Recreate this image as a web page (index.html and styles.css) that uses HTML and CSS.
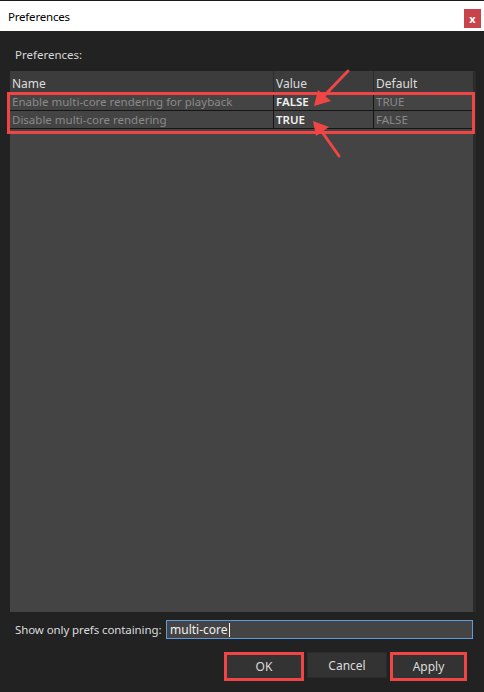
FILE: index.html
```html
<!DOCTYPE html>
<html>
<head>
<meta charset="utf-8">
<link rel="stylesheet" href="styles.css">
</head>
<body>
<div class="window">
  <div class="titlebar">
    <span class="title">Preferences</span>
    <span class="close">x</span>
  </div>
  <div class="content">
    <div class="label">Preferences:</div>
    <div class="tablewrap">
      <div class="table">
        <div class="row head">
          <div class="cell c1">Name</div>
          <div class="cell c2">Value</div>
          <div class="cell c3">Default</div>
        </div>
        <div class="row">
          <div class="cell c1">Enable multi-core rendering for playback</div>
          <div class="cell c2 val">FALSE</div>
          <div class="cell c3">TRUE</div>
        </div>
        <div class="row">
          <div class="cell c1">Disable multi-core rendering</div>
          <div class="cell c2 val">TRUE</div>
          <div class="cell c3">FALSE</div>
        </div>
        <div class="body-fill"></div>
      </div>
      <div class="strip"></div>
    </div>
    <div class="filter">
      <span class="flabel">Show only prefs containing:</span>
      <div class="input">multi-core<span class="caret"></span></div>
    </div>
    <div class="buttons">
      <div class="btn hl">OK</div>
      <div class="btn">Cancel</div>
      <div class="btn hl">Apply</div>
    </div>
  </div>
  <div class="hlbox"></div>
  <svg class="arrows" width="484" height="692" viewBox="0 0 484 692">
    <line x1="348" y1="71" x2="322" y2="98" stroke="#f04545" stroke-width="3" stroke-linecap="round"/>
    <polygon points="314,106 318,90 331,101" fill="#f04545"/>
    <line x1="339" y1="156" x2="320" y2="129" stroke="#f04545" stroke-width="3" stroke-linecap="round"/>
    <polygon points="313,121 329,127 316,136" fill="#f04545"/>
  </svg>
</div>
</body>
</html>
```

FILE: styles.css
```css
html, body {
  margin: 0;
  padding: 0;
  background: #222222;
}
.window {
  position: relative;
  width: 484px;
  height: 692px;
  overflow: hidden;
  font-family: "Noto Sans", "Open Sans", sans-serif;
  font-size: 11.5px;
  background: #222222;
  border-top: 1px solid #1b1b1b;
  box-sizing: border-box;
}
.titlebar {
  height: 30px;
  background: #ffffff;
  display: flex;
  align-items: center;
  justify-content: space-between;
  padding: 0 3px 0 8px;
}
.title {
  color: #000;
  font-size: 11.5px;
  letter-spacing: -0.2px;
}
.close {
  width: 17px;
  height: 19px;
  background: #c9444a;
  color: #fff;
  font-weight: bold;
  font-size: 11px;
  display: flex;
  align-items: center;
  justify-content: center;
  margin-top: 4px;
}
.content {
  padding: 0 8px 0 10px;
  display: flex;
  flex-direction: column;
}
.label {
  color: #d8d8d8;
  margin: 15px 0 0 5px;
  height: 25px;
  line-height: 17px;
}
.tablewrap {
  display: flex;
  height: 541px;
}
.table {
  width: 463px;
  display: flex;
  flex-direction: column;
  background: #444444;
}
.strip {
  width: 3px;
  background: #2b2b2b;
}
.row {
  display: flex;
  height: 18px;
  border-bottom: 1px solid #151515;
  box-sizing: border-box;
}
.row.head {
  height: 22px;
  background: #3c3c3c;
  border-bottom: none;
  align-items: flex-end;
}
.cell {
  color: #8a8a8a;
  line-height: 17px;
  padding-left: 2px;
  box-sizing: border-box;
  white-space: nowrap;
  overflow: hidden;
}
.head .cell {
  color: #dcdcdc;
  font-size: 12px;
  line-height: 20px;
  height: 22px;
  padding-top: 3px;
}
.c1 { width: 263px; }
.c2 { width: 100px; border-left: 1px solid #151515; }
.c3 { width: 100px; border-left: 1px solid #151515; }
.head .c2, .head .c3 { border-left: 1px solid #2c2c2c; }
.cell.val {
  color: #f2f2f2;
  font-weight: 600;
}
.body-fill { flex: 1; }
.filter {
  display: flex;
  align-items: center;
  margin-top: 8px;
  height: 19px;
}
.flabel {
  color: #dcdcdc;
  margin-left: 5px;
  width: 151px;
  font-size: 11.5px;
  letter-spacing: -0.1px;
  white-space: nowrap;
}
.input {
  flex: 1;
  height: 19px;
  box-sizing: border-box;
  border: 1px solid #5b9be0;
  background: #444444;
  color: #f0f0f0;
  font-size: 12px;
  line-height: 17px;
  padding-left: 3px;
  margin-right: 3px;
  display: flex;
  align-items: center;
}
.caret {
  display: inline-block;
  width: 1px;
  height: 14px;
  background: #f0f0f0;
  margin-left: 1px;
}
.buttons {
  display: flex;
  justify-content: flex-end;
  gap: 3px;
  margin-top: 13px;
  padding-right: 9px;
}
.btn {
  width: 80px;
  height: 26px;
  box-sizing: border-box;
  background: #333333;
  border: 1px solid #2a2a2a;
  color: #dcdcdc;
  font-size: 12px;
  display: flex;
  align-items: center;
  justify-content: center;
}
.btn.hl {
  border: 3px solid #f04545;
  height: 29px;
}
.btn.hl:last-child { width: 77px; }
.hlbox {
  position: absolute;
  left: 7px;
  top: 91px;
  width: 468px;
  height: 42px;
  box-sizing: border-box;
  border: 3px solid #f04545;
}
.arrows {
  position: absolute;
  left: 0;
  top: -1px;
}
```
